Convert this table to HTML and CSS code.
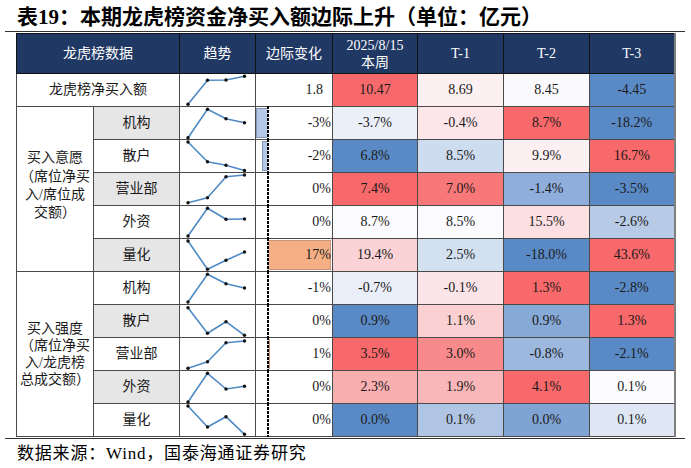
FILE: index.html
```html
<!DOCTYPE html>
<html lang="zh">
<head>
<meta charset="utf-8">
<title>龙虎榜资金</title>
<link rel="stylesheet" href="styles.css">
</head>
<body>
<div class="page">
  <h1 class="title">表19：本期龙虎榜资金净买入额边际上升（单位：亿元）</h1>
  <table class="tbl">
    <colgroup>
      <col class="c-grp"><col class="c-sub"><col class="c-trend"><col class="c-mc">
      <col class="c-d1"><col class="c-d2"><col class="c-d2"><col class="c-d1">
    </colgroup>
    <thead>
      <tr>
        <th colspan="2">龙虎榜数据</th>
        <th>趋势</th>
        <th>边际变化</th>
        <th class="two">2025/8/15<br>本周</th>
        <th>T-1</th>
        <th>T-2</th>
        <th>T-3</th>
      </tr>
    </thead>
    <tbody>
      <tr>
        <td colspan="2" class="lbl">龙虎榜净买入额</td>
        <td class="spark"><svg viewBox="0 0 76 32"><polyline points="8,30.3 27.5,6.3 46,6 64.5,2.3"/><circle cx="8" cy="30.3" r="1.7"/><circle cx="27.5" cy="6.3" r="1.7"/><circle cx="46" cy="6" r="1.7"/><circle cx="64.5" cy="2.3" r="1.7"/></svg></td>
        <td class="mc"><div class="mcw first"><span class="v">1.8</span></div></td>
        <td class="num" style="background:#f8696b">10.47</td>
        <td class="num" style="background:#fcf0f3">8.69</td>
        <td class="num" style="background:#fafafd">8.45</td>
        <td class="num" style="background:#5a8ac6">-4.45</td>
      </tr>
      <tr>
        <td rowspan="5" class="grp">买入意愿<br>（席位净买<br>入/席位成<br>交额）</td>
        <td class="sub grey">机构</td>
        <td class="spark"><svg viewBox="0 0 76 32"><polyline points="8,30.7 27.5,2.3 46,11.7 64.5,15.7"/><circle cx="8" cy="30.7" r="1.7"/><circle cx="27.5" cy="2.3" r="1.7"/><circle cx="46" cy="11.7" r="1.7"/><circle cx="64.5" cy="15.7" r="1.7"/></svg></td>
        <td class="mc"><div class="mcw"><span class="bar neg" style="left:0;width:12px"></span><span class="axis"></span><span class="v">-3%</span></div></td>
        <td class="num" style="background:#eaeff8">-3.7%</td>
        <td class="num" style="background:#fde6e9">-0.4%</td>
        <td class="num" style="background:#f8696b">8.7%</td>
        <td class="num" style="background:#5a8ac6">-18.2%</td>
      </tr>
      <tr>
        <td class="sub">散户</td>
        <td class="spark"><svg viewBox="0 0 76 32"><polyline points="8,2 27.5,21.7 46,25.3 64.5,30.5"/><circle cx="8" cy="2" r="1.7"/><circle cx="27.5" cy="21.7" r="1.7"/><circle cx="46" cy="25.3" r="1.7"/><circle cx="64.5" cy="30.5" r="1.7"/></svg></td>
        <td class="mc"><div class="mcw"><span class="bar neg" style="left:6px;width:6px"></span><span class="axis"></span><span class="v">-2%</span></div></td>
        <td class="num" style="background:#5a8ac6">6.8%</td>
        <td class="num" style="background:#cddcee">8.5%</td>
        <td class="num" style="background:#fcf0f2">9.9%</td>
        <td class="num" style="background:#f8696b">16.7%</td>
      </tr>
      <tr>
        <td class="sub grey">营业部</td>
        <td class="spark"><svg viewBox="0 0 76 32"><polyline points="8,29.7 27.5,24.7 46,3.7 64.5,2"/><circle cx="8" cy="29.7" r="1.7"/><circle cx="27.5" cy="24.7" r="1.7"/><circle cx="46" cy="3.7" r="1.7"/><circle cx="64.5" cy="2" r="1.7"/></svg></td>
        <td class="mc"><div class="mcw"><span class="axis"></span><span class="v">0%</span></div></td>
        <td class="num" style="background:#f8696b">7.4%</td>
        <td class="num" style="background:#f87779">7.0%</td>
        <td class="num" style="background:#8faedb">-1.4%</td>
        <td class="num" style="background:#5a8ac6">-3.5%</td>
      </tr>
      <tr>
        <td class="sub">外资</td>
        <td class="spark"><svg viewBox="0 0 76 32"><polyline points="8,30 27.5,2.3 46,13.3 64.5,13"/><circle cx="8" cy="30" r="1.7"/><circle cx="27.5" cy="2.3" r="1.7"/><circle cx="46" cy="13.3" r="1.7"/><circle cx="64.5" cy="13" r="1.7"/></svg></td>
        <td class="mc"><div class="mcw"><span class="axis"></span><span class="v">0%</span></div></td>
        <td class="num" style="background:#fbfafd">8.7%</td>
        <td class="num" style="background:#fbfbfe">8.5%</td>
        <td class="num" style="background:#fcdfe3">15.5%</td>
        <td class="num" style="background:#b8cbe6">-2.6%</td>
      </tr>
      <tr>
        <td class="sub grey">量化</td>
        <td class="spark"><svg viewBox="0 0 76 32"><polyline points="8,2 27.5,30.3 46,21.3 64.5,13"/><circle cx="8" cy="2" r="1.7"/><circle cx="27.5" cy="30.3" r="1.7"/><circle cx="46" cy="21.3" r="1.7"/><circle cx="64.5" cy="13" r="1.7"/></svg></td>
        <td class="mc"><div class="mcw"><span class="bar pos" style="left:12px;width:63px"></span><span class="axis"></span><span class="v">17%</span></div></td>
        <td class="num" style="background:#fbd3d6">19.4%</td>
        <td class="num" style="background:#d3e0f0">2.5%</td>
        <td class="num" style="background:#5a8ac6">-18.0%</td>
        <td class="num" style="background:#f8696b">43.6%</td>
      </tr>
      <tr>
        <td rowspan="5" class="grp g2">买入强度<br>（席位净买<br>入/龙虎榜<br>总成交额）</td>
        <td class="sub">机构</td>
        <td class="spark"><svg viewBox="0 0 76 32"><polyline points="8,30 27.5,2.3 46,11.7 64.5,16"/><circle cx="8" cy="30" r="1.7"/><circle cx="27.5" cy="2.3" r="1.7"/><circle cx="46" cy="11.7" r="1.7"/><circle cx="64.5" cy="16" r="1.7"/></svg></td>
        <td class="mc"><div class="mcw"><span class="axis"></span><span class="v">-1%</span></div></td>
        <td class="num" style="background:#e9eef8">-0.7%</td>
        <td class="num" style="background:#fce5e8">-0.1%</td>
        <td class="num" style="background:#f8696b">1.3%</td>
        <td class="num" style="background:#5a8ac6">-2.8%</td>
      </tr>
      <tr>
        <td class="sub grey">散户</td>
        <td class="spark"><svg viewBox="0 0 76 32"><polyline points="8,2.7 27.5,28.3 46,16.7 64.5,30.3"/><circle cx="8" cy="2.7" r="1.7"/><circle cx="27.5" cy="28.3" r="1.7"/><circle cx="46" cy="16.7" r="1.7"/><circle cx="64.5" cy="30.3" r="1.7"/></svg></td>
        <td class="mc"><div class="mcw"><span class="axis"></span><span class="v">0%</span></div></td>
        <td class="num" style="background:#5a8ac6">0.9%</td>
        <td class="num" style="background:#fad0d3">1.1%</td>
        <td class="num" style="background:#87a9d6">0.9%</td>
        <td class="num" style="background:#f8696b">1.3%</td>
      </tr>
      <tr>
        <td class="sub">营业部</td>
        <td class="spark"><svg viewBox="0 0 76 32"><polyline points="8,30.3 27.5,23.7 46,4.7 64.5,3"/><circle cx="8" cy="30.3" r="1.7"/><circle cx="27.5" cy="23.7" r="1.7"/><circle cx="46" cy="4.7" r="1.7"/><circle cx="64.5" cy="3" r="1.7"/></svg></td>
        <td class="mc"><div class="mcw"><span class="bar pos" style="left:12px;width:2px"></span><span class="axis"></span><span class="v">1%</span></div></td>
        <td class="num" style="background:#f8696b">3.5%</td>
        <td class="num" style="background:#f98a8c">3.0%</td>
        <td class="num" style="background:#9cb8df">-0.8%</td>
        <td class="num" style="background:#5a8ac6">-2.1%</td>
      </tr>
      <tr>
        <td class="sub grey">外资</td>
        <td class="spark"><svg viewBox="0 0 76 32"><polyline points="8,31 27.5,2.3 46,18 64.5,15.3"/><circle cx="8" cy="31" r="1.7"/><circle cx="27.5" cy="2.3" r="1.7"/><circle cx="46" cy="18" r="1.7"/><circle cx="64.5" cy="15.3" r="1.7"/></svg></td>
        <td class="mc"><div class="mcw"><span class="axis"></span><span class="v">0%</span></div></td>
        <td class="num" style="background:#f9aeb0">2.3%</td>
        <td class="num" style="background:#fab7b9">1.9%</td>
        <td class="num" style="background:#f8696b">4.1%</td>
        <td class="num" style="background:#fcfcff">0.1%</td>
      </tr>
      <tr>
        <td class="sub">量化</td>
        <td class="spark"><svg viewBox="0 0 76 32"><polyline points="8,2 27.5,23 46,12.7 64.5,30.3"/><circle cx="8" cy="2" r="1.7"/><circle cx="27.5" cy="23" r="1.7"/><circle cx="46" cy="12.7" r="1.7"/><circle cx="64.5" cy="30.3" r="1.7"/></svg></td>
        <td class="mc"><div class="mcw"><span class="axis"></span><span class="v">0%</span></div></td>
        <td class="num" style="background:#5a8ac6">0.0%</td>
        <td class="num" style="background:#b0c5e4">0.1%</td>
        <td class="num" style="background:#7fa3d3">0.0%</td>
        <td class="num" style="background:#e0e7f4">0.1%</td>
      </tr>
    </tbody>
  </table>
  <div class="source">数据来源：Wind，国泰海通证券研究</div>
</div>
</body>
</html>
```
FILE: styles.css
```css
html, body {
  margin: 0;
  padding: 0;
  background: #ffffff;
}

.page {
  width: 680px;
  margin-left: 5px;
  font-family: "Liberation Serif", "Noto Sans CJK SC", serif;
  color: #1a1a1a;
}

.title {
  margin: 0;
  height: 32px;
  box-sizing: border-box;
  padding: 3px 0 0 12px;
  border-bottom: 1px solid #333333;
  font-size: 21px;
  line-height: 28px;
  font-weight: bold;
  color: #000000;
  white-space: nowrap;
}

.tbl {
  margin: 1px 0 0 11px;
  border-collapse: collapse;
  table-layout: fixed;
  width: 659px;
  font-size: 14px;
  border-right: 2px solid #7f7f7f;
}

.c-grp { width: 77px; }
.c-sub { width: 86px; }
.c-trend { width: 76px; }
.c-mc { width: 77px; }
.c-d1 { width: 85px; }
.c-d2 { width: 86px; }

.tbl th {
  height: 39px;
  padding: 0;
  background: #203864;
  color: #ffffff;
  font-weight: normal;
  font-size: 14px;
  border: 1px solid #111111;
  text-align: center;
  line-height: 17px;
}

.tbl td {
  height: 32px;
  padding: 0;
  border: 1px solid #4a4a4a;
  text-align: center;
  vertical-align: middle;
  line-height: 18px;
}

.grey {
  background: #e7e6e6;
}

.tbl td.grp {
  font-size: 14px;
  line-height: 18.3px;
  padding-bottom: 6px;
}

.tbl td.grp.g2 {
  line-height: 17px;
  padding-bottom: 0;
}

.spark svg {
  display: block;
  width: 76px;
  height: 32px;
  overflow: visible;
}

.spark polyline {
  fill: none;
  stroke: #4f8ac5;
  stroke-width: 1.6;
  stroke-linejoin: round;
}

.spark circle {
  fill: #111111;
}

.tbl td.mc {
  text-align: right;
}

.mcw {
  position: relative;
  height: 32px;
}

.bar {
  position: absolute;
  top: 1px;
  bottom: 1px;
  box-sizing: border-box;
}

.bar.neg {
  background: #b4c7e7;
  border: 1px solid #8497b0;
}

.bar.pos {
  background: #f4b084;
  border: 1px solid #c9957a;
}

.axis {
  position: absolute;
  left: 11px;
  top: -1px;
  bottom: -1px;
  width: 2px;
  background: repeating-linear-gradient(to bottom, #000000 0 3px, rgba(255, 255, 255, 0.6) 3px 4px);
}

.mcw .v {
  position: relative;
  display: block;
  line-height: 32px;
  padding-right: 1px;
}

.mcw.first .v {
  padding-right: 9px;
}

.source {
  margin-top: 1px;
  border-top: 1px solid #333333;
  padding: 3px 0 0 12px;
  font-size: 17px;
  line-height: 24px;
  letter-spacing: 0.8px;
  color: #000000;
}
```
